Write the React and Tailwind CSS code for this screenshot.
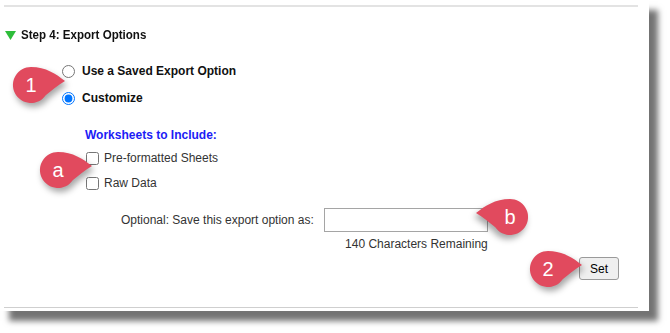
import React from "react";

function Badge({ cx, cy, label, flip }) {
  return (
    <div
      className="absolute w-[80px] h-[60px]"
      style={{ left: flip ? cx - 55 : cx - 25, top: cy - 25 }}
    >
      <svg
        width="80"
        height="60"
        viewBox="0 0 80 60"
        className={flip ? "-scale-x-100" : ""}
        style={{ filter: "drop-shadow(2px 4px 3px rgba(0,0,0,0.35))" }}
      >
        <path
          d="M59 21 C50 14 40 7 25 7 A18 18 0 1 0 39.7 35.3 C46 30 52 25 59 21 Z"
          fill="#e14a5e"
        />
      </svg>
      <span
        className="absolute top-[25px] -translate-x-1/2 -translate-y-1/2 text-white text-[20px] leading-none"
        style={{ left: flip ? 55 : 25, fontFamily: '"Liberation Sans", Arial, sans-serif' }}
      >
        {label}
      </span>
    </div>
  );
}

export default function App() {
  return (
    <div className="w-[670px] h-[333px] bg-white relative" style={{ fontFamily: '"Liberation Sans", Arial, sans-serif' }}>
      <div className="w-[649px] h-[311px] bg-white shadow-[9px_10px_6px_rgba(0,0,0,0.55)] pt-[5px] flex flex-col">
        <div className="h-[2px] ml-[4px] w-[634px] bg-[#e3e3e3]" />
        <div className="h-[16px] mt-[20px] flex items-center pl-[5px]">
          <svg width="11" height="9" viewBox="0 0 11 9">
            <path d="M0 0 H11 L5.5 9 Z" fill="#2ebd3a" />
          </svg>
          <span className="ml-[5px] inline-block origin-left scale-x-[0.89] text-[13px] font-bold text-[#111] whitespace-nowrap">
            Step 4: Export Options
          </span>
        </div>
        <div className="mt-[18px] ml-[62px] flex flex-col gap-[7px]">
          <label className="h-[20px] flex items-center gap-[7px] text-[12px] font-bold text-[#111]">
            <input type="radio" name="opt" className="m-0 w-[13px] h-[13px]" />
            Use a Saved Export Option
          </label>
          <label className="h-[20px] flex items-center gap-[7px] text-[12px] font-bold text-[#111]">
            <input type="radio" name="opt" defaultChecked className="m-0 w-[13px] h-[13px]" />
            Customize
          </label>
        </div>
        <div className="mt-[19px] ml-[85px] h-[16px] flex items-center text-[12px] font-bold text-[#1c1cf5]">
          Worksheets to Include:
        </div>
        <div className="mt-[5px] ml-[86px] flex flex-col gap-[5px]">
          <label className="h-[20px] flex items-center gap-[5px] text-[12px] text-[#333]">
            <input type="checkbox" className="m-0 w-[13px] h-[13px]" />
            Pre-formatted Sheets
          </label>
          <label className="h-[20px] flex items-center gap-[5px] text-[12px] text-[#333]">
            <input type="checkbox" className="m-0 w-[13px] h-[13px]" />
            Raw Data
          </label>
        </div>
        <div className="mt-[15px] pl-[121px] flex items-start gap-[10px]">
          <span className="h-[24px] flex items-center text-[12px] text-[#333]">
            Optional: Save this export option as:
          </span>
          <div className="flex flex-col items-end">
            <input type="text" className="w-[164px] h-[24px] border border-[#a5a5a5] bg-white outline-none" />
            <span className="mt-[4px] h-[16px] flex items-center text-[12px] text-[#333]">
              140 Characters Remaining
            </span>
          </div>
        </div>
        <div className="mt-[5px] flex justify-end pr-[30px]">
          <button className="w-[40px] h-[23px] bg-[#efefef] border border-[#9a9a9a] rounded-[3px] text-[12px] text-black">
            Set
          </button>
        </div>
        <div className="mt-[27px] h-[1px] ml-[4px] w-[634px] bg-[#cfcfcf]" />
      </div>
      <Badge cx={31} cy={85} label="1" />
      <Badge cx={58} cy={170} label="a" />
      <Badge cx={510} cy={217} label="b" flip />
      <Badge cx={548} cy={269} label="2" />
    </div>
  );
}
